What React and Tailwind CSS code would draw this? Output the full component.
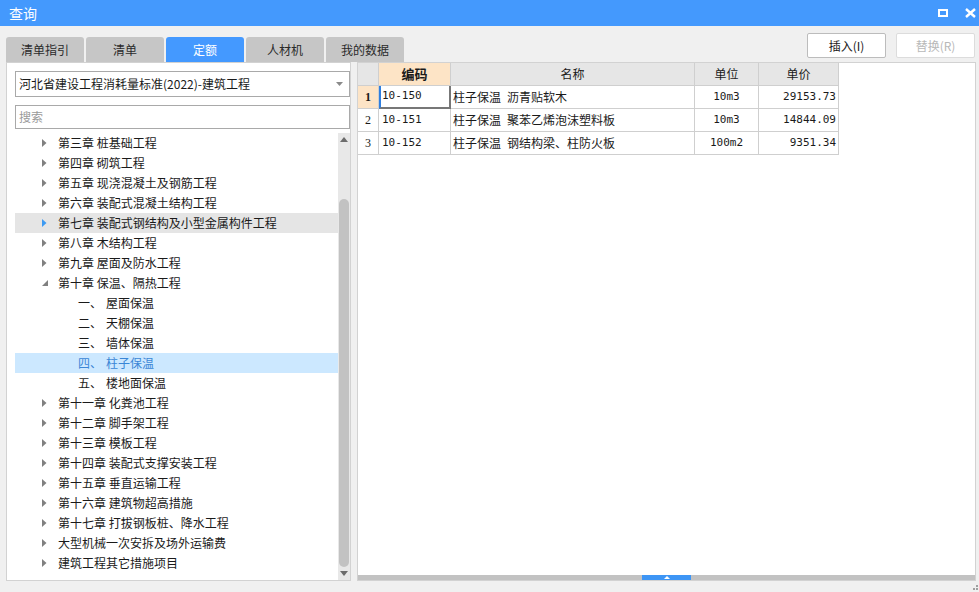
import React from 'react';

const font = { fontFamily: '"Noto Sans CJK SC", "Noto Sans", sans-serif' };

const treeItems = [
  { text: '第三章 桩基础工程', level: 0 },
  { text: '第四章 砌筑工程', level: 0 },
  { text: '第五章 现浇混凝土及钢筋工程', level: 0 },
  { text: '第六章 装配式混凝土结构工程', level: 0 },
  { text: '第七章 装配式钢结构及小型金属构件工程', level: 0, hover: true },
  { text: '第八章 木结构工程', level: 0 },
  { text: '第九章 屋面及防水工程', level: 0 },
  { text: '第十章 保温、隔热工程', level: 0, open: true },
  { num: '一、', text: '屋面保温', level: 1 },
  { num: '二、', text: '天棚保温', level: 1 },
  { num: '三、', text: '墙体保温', level: 1 },
  { num: '四、', text: '柱子保温', level: 1, selected: true },
  { num: '五、', text: '楼地面保温', level: 1 },
  { text: '第十一章 化粪池工程', level: 0 },
  { text: '第十二章 脚手架工程', level: 0 },
  { text: '第十三章 模板工程', level: 0 },
  { text: '第十四章 装配式支撑安装工程', level: 0 },
  { text: '第十五章 垂直运输工程', level: 0 },
  { text: '第十六章 建筑物超高措施', level: 0 },
  { text: '第十七章 打拔钢板桩、降水工程', level: 0 },
  { text: '大型机械一次安拆及场外运输费', level: 0 },
  { text: '建筑工程其它措施项目', level: 0 },
];

const rows = [
  { n: '1', code: '10-150', name: '柱子保温\u2002沥青贴软木', unit: '10m3', price: '29153.73' },
  { n: '2', code: '10-151', name: '柱子保温\u2002聚苯乙烯泡沫塑料板', unit: '10m3', price: '14844.09' },
  { n: '3', code: '10-152', name: '柱子保温\u2002钢结构梁、柱防火板', unit: '100m2', price: '9351.34' },
];

const tabs = ['清单指引', '清单', '定额', '人材机', '我的数据'];

function Arrow({ open, color }) {
  if (open) {
    return (
      <svg width="6" height="6" viewBox="0 0 6 6">
        <polygon points="6,0 6,6 0,6" fill="#808080" />
      </svg>
    );
  }
  return (
    <svg width="5" height="8" viewBox="0 0 5 8">
      <polygon points="0,0 4.5,4 0,8" fill={color} />
    </svg>
  );
}

export default function App() {
  return (
    <div className="w-[979px] h-[592px] bg-[#f0f0f0] flex flex-col overflow-hidden text-[#1a1a1a]" style={font}>
      {/* title bar */}
      <div className="h-[26px] bg-[#4499fd] flex items-center pl-[9px] pr-[3px] text-white text-[14px]">
        <span>查询</span>
        <div className="ml-auto flex items-center gap-[17px]">
          <div className="w-[10px] h-[8px] border-2 border-white"></div>
          <svg width="11" height="10" viewBox="0 0 11 10">
            <path d="M1 1 L10 9 M10 1 L1 9" stroke="white" strokeWidth="2.4" />
          </svg>
        </div>
      </div>

      {/* tabs + buttons */}
      <div className="h-[36px] flex pl-[6px] pr-[4px]">
        <div className="flex gap-[2px] self-end">
          {tabs.map((t) => (
            <div
              key={t}
              className={
                t === '定额'
                  ? 'w-[78px] h-[25px] rounded-t-[3px] bg-[#4499ff] text-white text-[12px] flex items-center justify-center'
                  : 'w-[78px] h-[25px] rounded-t-[3px] bg-[#c6c6c6] text-[#2a2a2a] text-[12px] flex items-center justify-center'
              }
            >
              {t}
            </div>
          ))}
        </div>
        <div className="ml-auto flex gap-[10px] pt-[7px]">
          <div className="w-[79px] h-[25px] bg-white border border-[#bcbcbc] rounded-[2px] text-[12px] flex items-center justify-center">
            插入(I)
          </div>
          <div className="w-[79px] h-[25px] bg-white border border-[#dcdcdc] rounded-[2px] text-[12px] text-[#b8b8b8] flex items-center justify-center">
            替换(R)
          </div>
        </div>
      </div>

      {/* panels */}
      <div className="h-[519px] flex pl-[6px]">
        {/* left panel */}
        <div className="w-[345px] h-full bg-white border border-[#d2d2d2] flex flex-col pl-[8px] pt-[8px]">
          <div className="h-[26px] border border-[#a9a9a9] flex items-center pl-[3px] pr-[6px] text-[12px]">
            <span>河北省建设工程消耗量标准(2022)-建筑工程</span>
            <svg className="ml-auto" width="7" height="4" viewBox="0 0 7 4">
              <polygon points="0,0 7,0 3.5,4" fill="#8a8a8a" />
            </svg>
          </div>
          <div className="h-[24px] mt-[8px] border border-[#a9a9a9] flex items-center pl-[3px] text-[12px] text-[#9a9a9a]">
            搜索
          </div>
          <div className="flex-1 mt-[4px] flex min-h-0">
            <div className="flex-1 flex flex-col">
              {treeItems.map((it, i) => (
                <div
                  key={i}
                  className={
                    'h-[20px] flex items-center text-[12px] shrink-0 ' +
                    (it.selected ? 'bg-[#cce8ff] text-[#3a86d6]' : it.hover ? 'bg-[#e5e5e5]' : '')
                  }
                >
                  {it.level === 0 ? (
                    <>
                      <div className="w-[43px] pl-[27px] flex items-center">
                        <Arrow open={it.open} color={it.hover ? '#3d9af2' : '#808080'} />
                      </div>
                      <span className="whitespace-nowrap">{it.text}</span>
                    </>
                  ) : (
                    <>
                      <span className="pl-[63px] w-[91px] whitespace-nowrap">{it.num}</span>
                      <span className="whitespace-nowrap">{it.text}</span>
                    </>
                  )}
                </div>
              ))}
            </div>
            {/* vertical scrollbar */}
            <div className="w-[12px] bg-[#e8e8e8] flex flex-col items-center">
              <svg className="mt-[4px]" width="8" height="5" viewBox="0 0 8 5">
                <polygon points="4,0 8,5 0,5" fill="#6c6c6c" />
              </svg>
              <div className="mt-[57px] w-[10px] h-[368px] rounded-[5px] bg-[#c2c2c2]"></div>
              <svg className="mt-[4px]" width="8" height="5" viewBox="0 0 8 5">
                <polygon points="0,0 8,0 4,5" fill="#6c6c6c" />
              </svg>
            </div>
          </div>
        </div>

        {/* right panel */}
        <div className="ml-[6px] w-[619px] h-[519px] bg-white border border-[#d2d2d2] flex flex-col">
          <div className="grid grid-cols-[21px_72px_244px_64px_80px] text-[12px]">
            <div className="h-[23px] bg-[#e6e6e6] border-r border-b border-[#cfcfcf]"></div>
            <div className="h-[23px] bg-[#fde4c6] border-r border-b border-[#cfcfcf] flex items-center justify-center font-bold text-[13px]">
              编码
            </div>
            <div className="h-[23px] bg-[#e6e6e6] border-r border-b border-[#cfcfcf] flex items-center justify-center">名称</div>
            <div className="h-[23px] bg-[#e6e6e6] border-r border-b border-[#cfcfcf] flex items-center justify-center">单位</div>
            <div className="h-[23px] bg-[#e6e6e6] border-r border-b border-[#cfcfcf] flex items-center justify-center">单价</div>
            {rows.map((r, i) => (
              <React.Fragment key={r.n}>
                <div
                  className={
                    'h-[23px] border-r border-b border-[#cfcfcf] flex items-center justify-center ' +
                    (i === 0 ? 'bg-[#fde4c6] font-bold' : '')
                  }
                  style={{ fontFamily: '"Liberation Serif", serif' }}
                >
                  {r.n}
                </div>
                <div
                  className={
                    i === 0
                      ? 'h-[23px] border-l-2 border-l-[#2f7fe0] border-r-2 border-r-[#777] border-b-2 border-b-[#777] flex items-center pl-[1px] text-[11px]'
                      : 'h-[23px] border-r border-b border-[#cfcfcf] flex items-center pl-[3px] text-[11px]'
                  }
                  style={{ fontFamily: '"DejaVu Sans Mono", monospace' }}
                >
                  {r.code}
                </div>
                <div className="h-[23px] border-r border-b border-[#cfcfcf] flex items-center pl-[2px] whitespace-nowrap">
                  {r.name}
                </div>
                <div
                  className="h-[23px] border-r border-b border-[#cfcfcf] flex items-center justify-center text-[11px]"
                  style={{ fontFamily: '"DejaVu Sans Mono", monospace' }}
                >
                  {r.unit}
                </div>
                <div
                  className="h-[23px] border-r border-b border-[#cfcfcf] flex items-center justify-end pr-[2px] text-[11px]"
                  style={{ fontFamily: '"DejaVu Sans Mono", monospace' }}
                >
                  {r.price}
                </div>
              </React.Fragment>
            ))}
          </div>
          <div className="flex-1"></div>
          {/* horizontal scrollbar */}
          <div className="h-[5px] bg-[#c2c2c2] flex justify-center">
            <div className="w-[49px] h-[5px] bg-[#3d95f5] flex items-center justify-center">
              <svg width="6" height="3" viewBox="0 0 6 3">
                <polygon points="3,0 6,3 0,3" fill="white" />
              </svg>
            </div>
          </div>
        </div>
      </div>
      <div className="flex-1 flex justify-end items-end pr-[1px] pb-[2px]">
        <div className="grid grid-cols-2 gap-[1px]">
          <div className="w-[2px] h-[2px]"></div>
          <div className="w-[2px] h-[2px] bg-[#a0a0a0]"></div>
          <div className="w-[2px] h-[2px] bg-[#a0a0a0]"></div>
          <div className="w-[2px] h-[2px] bg-[#a0a0a0]"></div>
        </div>
      </div>
    </div>
  );
}
